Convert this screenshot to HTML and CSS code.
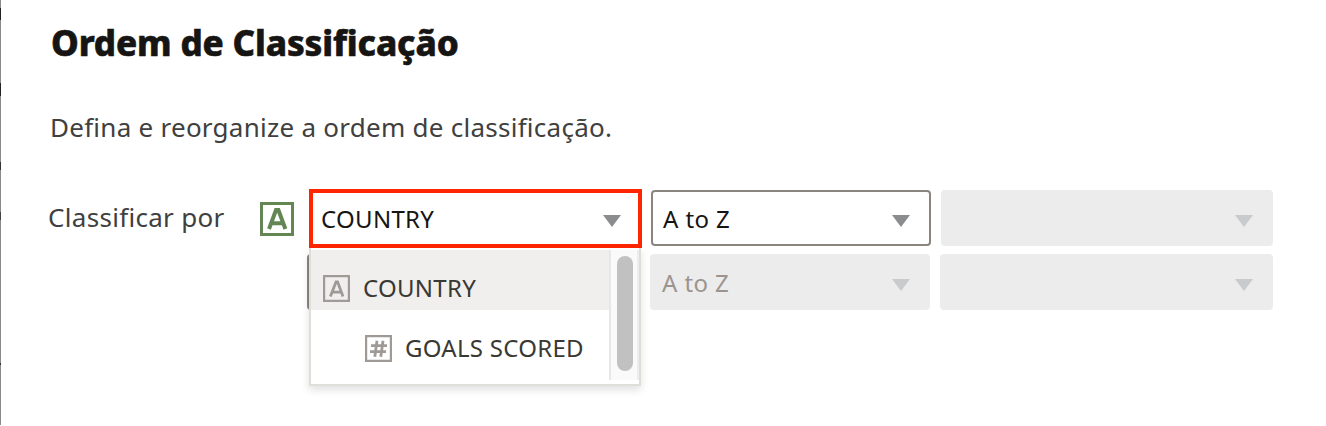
FILE: index.html
```html
<!DOCTYPE html>
<html lang="pt-BR">
<head>
<meta charset="utf-8">
<title>Ordem de Classificação</title>
<link rel="stylesheet" href="styles.css">
</head>
<body>
<main class="panel">
  <h1 class="title">Ordem de Classificação</h1>
  <p class="description">Defina e reorganize a ordem de classificação.</p>
  <section class="sort">
    <div class="sort-row">
      <label class="sort-label">Classificar por</label>
      <svg class="attr-icon" viewBox="0 0 34 34"><path class="frame" d="M1.5 1.5h31v31h-31z"/><path class="glyph" d="M9 27 16 8h2.4l7 19M11.5 21.3h11"/></svg>
      <div class="select select-active"><span class="value">COUNTRY</span><svg class="arrow" viewBox="0 0 18 12"><path d="M0 0h18l-9 12z"/></svg></div>
      <div class="select select-order"><span class="value">A to Z</span><svg class="arrow" viewBox="0 0 18 12"><path d="M0 0h18l-9 12z"/></svg></div>
      <div class="select select-disabled"><svg class="arrow" viewBox="0 0 18 12"><path d="M0 0h18l-9 12z"/></svg></div>
    </div>
    <div class="sort-row sort-row-next">
      <div class="select select-behind"></div>
      <div class="select select-disabled select-order-next"><span class="value">A to Z</span><svg class="arrow" viewBox="0 0 18 12"><path d="M0 0h18l-9 12z"/></svg></div>
      <div class="select select-disabled"><svg class="arrow" viewBox="0 0 18 12"><path d="M0 0h18l-9 12z"/></svg></div>
    </div>
    <div class="menu">
      <ul class="options">
        <li class="option option-current">
          <svg class="option-icon" viewBox="0 0 27 27"><path class="frame" d="M1.1 1.1h24.8v24.8h-24.8z"/><path class="glyph" d="M7.4 21.5 13 7h1.6L20 21.5M9.2 17.2h9"/></svg>
          <span>COUNTRY</span>
        </li>
        <li class="option option-child">
          <svg class="option-icon" viewBox="0 0 27 27"><path class="frame" d="M1.1 1.1h24.8v24.8h-24.8z"/><path class="glyph" d="M6 10.7h16M5 16.7h16M12 5.7l-2.2 16M18 5.7l-2.2 16"/></svg>
          <span>GOALS SCORED</span>
        </li>
      </ul>
      <div class="scrollbar"><div class="thumb"></div></div>
    </div>
  </section>
</main>
</body>
</html>
```
FILE: styles.css
```css
* { box-sizing: border-box; }
body {
  margin: 0;
  background: #fff;
  font-family: "Noto Sans", "Open Sans", sans-serif;
  color: #161513;
}
.panel {
  height: 425px;
  padding: 19px 0 0 50px;
  background:
    linear-gradient(#222, #222) 0 8px / 1px 12px no-repeat,
    linear-gradient(#222, #222) 0 83px / 1px 13px no-repeat,
    linear-gradient(#333, #333) 0 162px / 1px 8px no-repeat,
    linear-gradient(#444, #444) 0 212px / 1px 8px no-repeat,
    linear-gradient(#333, #333) 0 363px / 1px 2px no-repeat,
    linear-gradient(#8a8a8a, #8a8a8a) 0 0 / 1px 100% no-repeat;
}
.title {
  margin: 0 0 0 1px;
  height: 48px;
  font-size: 35px;
  font-weight: 800;
  line-height: 48px;
  letter-spacing: -.14px;
  -webkit-text-stroke: .6px #161513;
  white-space: nowrap;
}
.description {
  margin: 40px 0 0;
  height: 40px;
  font-size: 26px;
  line-height: 40px;
  letter-spacing: .26px;
  color: #404040;
  white-space: nowrap;
}
.sort { position: relative; margin: 43px 0 0 -2px; }
.sort-row { display: flex; align-items: center; height: 56px; }
.sort-row-next { margin-top: 8px; padding-left: 259px; }
.sort-label {
  width: 212px;
  height: 42px;
  line-height: 40px;
  font-size: 26px;
  letter-spacing: .3px;
  color: #404040;
  white-space: nowrap;
}
.attr-icon { width: 34px; height: 34px; margin-top: 2px; fill: none; stroke: #648655; }
.attr-icon .frame { stroke-width: 3; }
.attr-icon .glyph { stroke-width: 4; }
.select {
  display: flex;
  align-items: center;
  justify-content: space-between;
  width: 332px;
  height: 56px;
  border: 2px solid #8b8580;
  border-radius: 4px;
  font-size: 24px;
  letter-spacing: .3px;
  padding: 0 19px 0 10px;
  white-space: nowrap;
}
.arrow { width: 18px; height: 12px; margin: 5px 0 0 auto; fill: #8b8c8d; flex: none; }
.select-active {
  width: 333px;
  height: 59px;
  margin: 1px 0 0 15px;
  padding: 0 17px 0 8px;
  border: 4px solid #ff2600;
  border-radius: 0;
}
.select-order { width: 280px; margin-left: 9px; }
.select-order .value { letter-spacing: .4px; }
.select-disabled { margin-left: 10px; padding-right: 18px; background: #ececec; border-color: #ececec; color: #9b948f; }
.select-disabled .value { letter-spacing: .4px; }
.select-disabled .arrow { fill: #c9cacb; }
.select-behind { width: 333px; }
.select-order-next { width: 280px; }
.sort-row-next .select-disabled:last-child { width: 333px; }
.menu {
  position: absolute;
  left: 261px;
  top: 58px;
  display: flex;
  width: 332px;
  height: 138px;
  padding: 2px 0 4px;
  background: #fff;
  border: 2px solid #dfdfda;
  border-top: 0;
  box-shadow: 0 4px 8px rgba(0, 0, 0, .12);
}
.options { flex: 1; margin: 0; padding: 0; list-style: none; }
.option {
  display: flex;
  align-items: center;
  gap: 13px;
  height: 60px;
  padding: 17px 0 0 12px;
  font-size: 24px;
  line-height: 36px;
  letter-spacing: .28px;
  color: #3a3833;
  white-space: nowrap;
}
.option span { margin-bottom: 2px; }
.option-current { background: #f0efed; }
.option-child { padding-left: 54px; }
.option-icon { width: 27px; height: 27px; fill: none; stroke: #a09a96; flex: none; }
.option-icon .frame { stroke-width: 2.2; }
.option-icon .glyph { stroke-width: 2.8; }
.scrollbar {
  width: 30px;
  height: 130px;
  padding: 6px 0 0 6px;
  background: #fafafa;
  border-left: 2px solid #e7e7e7;
  border-right: 2px solid #ededed;
}
.thumb { width: 16px; height: 115px; border-radius: 8px; background: #c1c1c1; }
```
